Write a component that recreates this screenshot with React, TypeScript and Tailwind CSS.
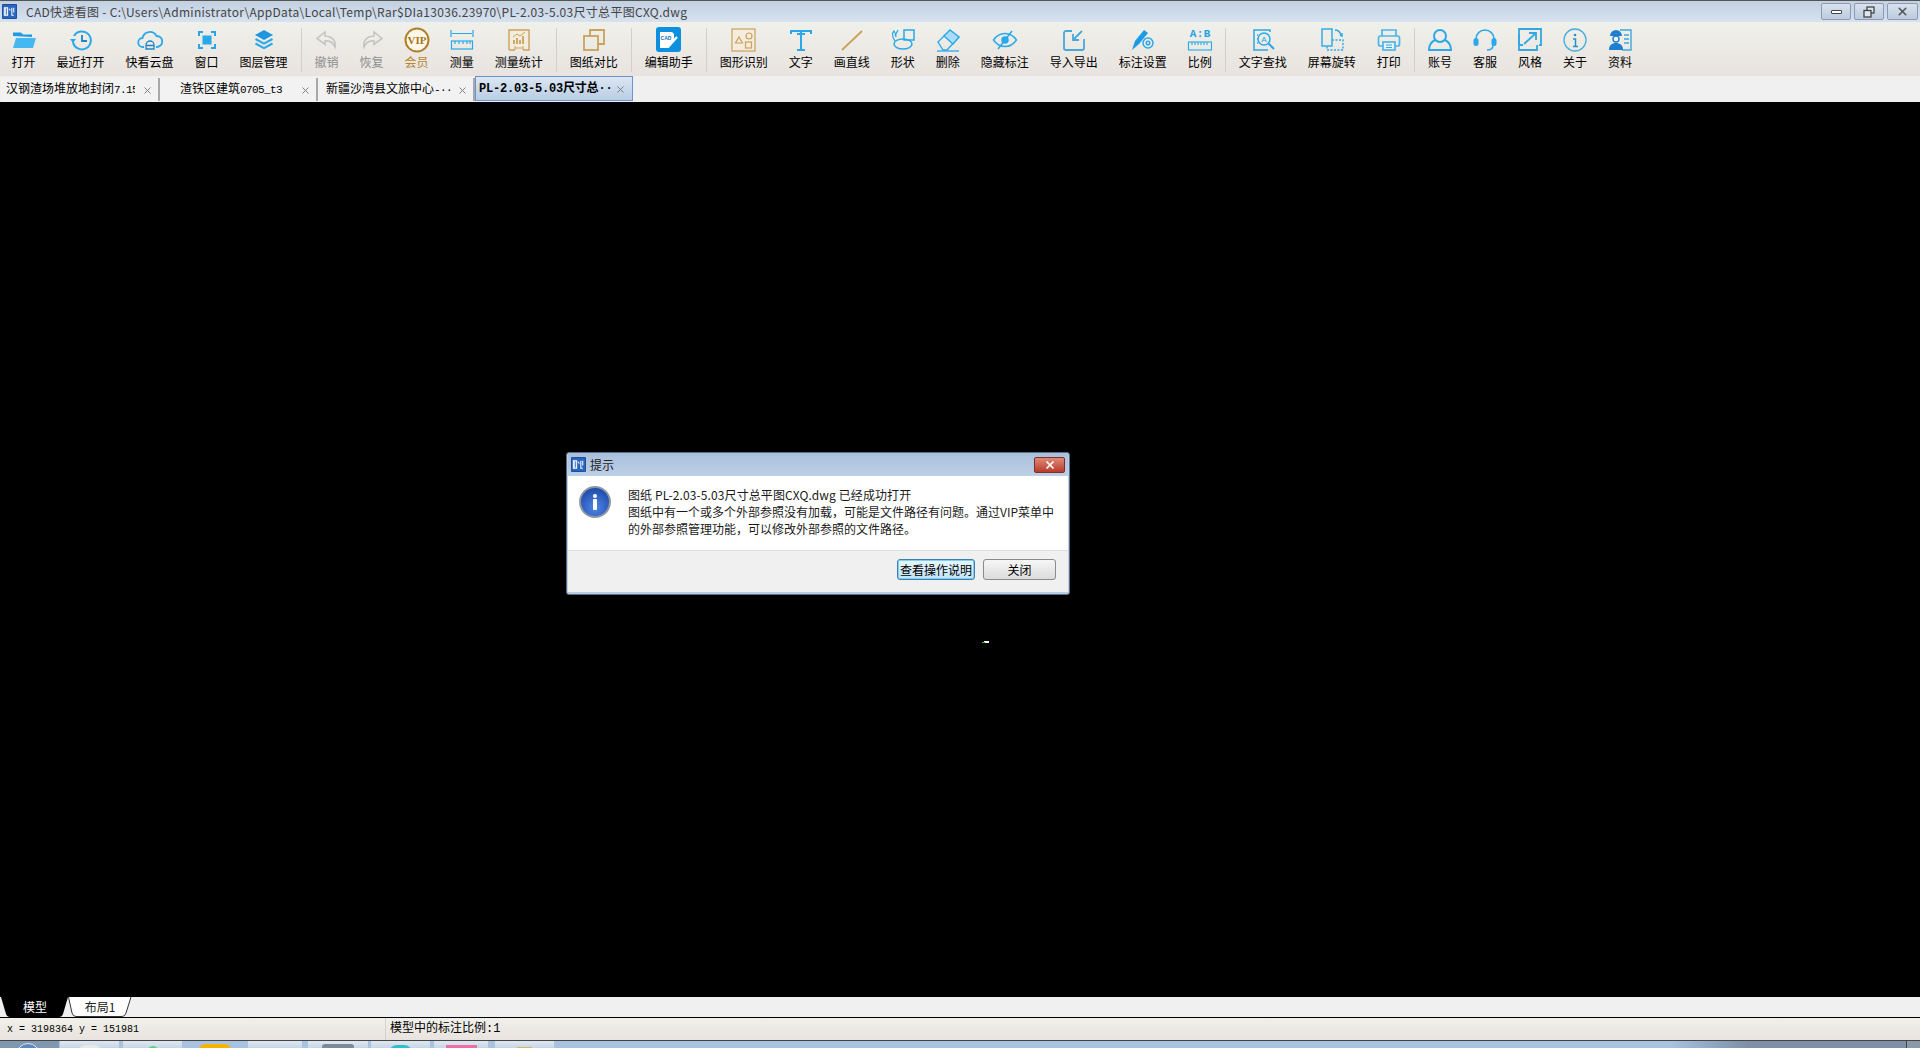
import type { ReactNode } from "react";
import { X } from "lucide-react";

const blue = "#29a9ea";
const gold = "#c9a25e";
const grey = "#c4c4c4";

// 软件图标（标题栏和对话框共用）
function AppLogo({ className }: { className: string }) {
  return (
    <svg viewBox="0 0 16 16" className={className}>
      <rect width="16" height="16" rx="1" fill="#1f4e9c" />
      <rect x="1" y="1" width="14" height="14" fill="#2a66bd" />
      <path d="M2.500 4h3.500v8H2.500zM4 4v8M7.500 5l1.500 2M10.500 4v8h2M12.500 4v5" stroke="#fff" strokeWidth="1.100" fill="none" />
    </svg>
  );
}

type IconProps = { children: ReactNode; color?: string; sw?: number };

function Ico({ children, color = blue, sw = 1.5 }: IconProps) {
  return (
    <svg viewBox="0 0 26 26" width="26" height="26" fill="none" stroke={color} strokeWidth={sw}>
      {children}
    </svg>
  );
}

const icons: Record<string, ReactNode> = {
  打开: (
    <Ico>
      <path d="M2 9V5.500h8l2 2h9v2.500z" fill="#1f9be6" stroke="none" />
      <path d="M2 21l3-10h20l-3 10z" fill="#45b8f2" stroke="none" />
    </Ico>
  ),
  最近打开: (
    <Ico>
      <path d="M6 9a9 9 0 1 1-1 6" strokeWidth="2" />
      <path d="M2 12h6l-3 4z" fill={blue} stroke="none" />
      <path d="M14 8v6h5" stroke="#1d86c9" strokeWidth="1.800" />
    </Ico>
  ),
  快看云盘: (
    <Ico>
      <path d="M7 20H6a4.500 4.500 0 0 1-.5-9A7.500 7.500 0 0 1 19.500 9a5.500 5.500 0 0 1 .5 11h-1" strokeWidth="1.800" />
      <path d="M9 22v-4a4 4 0 0 1 8 0v4zM9 18.500h8" strokeWidth="1.300" stroke="#1d86c9" />
    </Ico>
  ),
  窗口: (
    <Ico sw={2}>
      <path d="M5 9V5h4M17 5h4v4M21 17v4h-4M9 21H5v-4" stroke="#26a6e8" />
      <rect x="8.500" y="8.500" width="9" height="9" fill={blue} stroke="none" />
    </Ico>
  ),
  图层管理: (
    <Ico>
      <path d="M13 3l9 5-9 5-9-5z" fill="#2096de" stroke="none" />
      <path d="M4.500 12l8.500 4.700 8.500-4.700M4.500 16.500l8.500 4.700 8.500-4.700" stroke="#2ba8ec" strokeWidth="2" />
    </Ico>
  ),
  撤销: (
    <Ico color={grey} sw={1.600}>
      <path d="M11 5l-8 6.500 8 6V14c4-.5 8 1 10 6 1-6-2-10.500-10-11z" />
    </Ico>
  ),
  恢复: (
    <Ico color={grey} sw={1.600}>
      <path d="M15 5l8 6.500-8 6V14c-4-.5-8 1-10 6-1-6 2-10.500 10-11z" />
    </Ico>
  ),
  会员: (
    <svg viewBox="0 0 26 26" width="26" height="26">
      <circle cx="13" cy="13" r="11.500" fill="#fff8e8" stroke="#b07f2a" strokeWidth="2" />
      <text x="13" y="17" textAnchor="middle" fontSize="11" fontWeight="700" fontFamily="'Liberation Serif', serif" fill="#a8741c">
        VIP
      </text>
    </svg>
  ),
  测量: (
    <Ico sw={1.200}>
      <path d="M2 3v7M24 3v7M3 6.500h20" />
      <rect x="2.500" y="14" width="21" height="8" />
      <path d="M6 14v3M10 14v3M14 14v3M18 14v3M21 14v3" />
    </Ico>
  ),
  测量统计: (
    <Ico color={gold} sw={1.400}>
      <path d="M3 23V3h20v20h-6M9 23H3" fill="#f4eddd" />
      <path d="M8 13v4M11 11v6M14 13v4M17 9v8" strokeWidth="1.800" />
      <path d="M7 10l4-3 3 2 5-4" strokeWidth="1" />
      <path d="M9 21h8M9 19v4M17 19v4" strokeWidth="1" />
    </Ico>
  ),
  图纸对比: (
    <Ico color={gold} sw={1.800}>
      <rect x="3" y="9" width="14" height="14" />
      <path d="M9 9V3h14v14h-6" />
    </Ico>
  ),
  编辑助手: (
    <svg viewBox="0 0 26 26" width="26" height="26">
      <rect width="25" height="25" rx="3" fill="#0d8fe0" />
      <path d="M4 20V5h12l2 2v6l-4 6-1 2H4z" fill="#fff" />
      <text x="10" y="12.500" textAnchor="middle" fontSize="5" fontWeight="700" fontFamily="'Liberation Sans', sans-serif" fill="#0d70b8">
        CAD
      </text>
      <path d="M13 19l8-9" stroke="#fff" strokeWidth="2.200" />
    </svg>
  ),
  图形识别: (
    <Ico color={gold} sw={1.200}>
      <rect x="1" y="2" width="23" height="22" fill="#f4eddd" />
      <path d="M8 10l3.500 6h-7z" />
      <circle cx="18" cy="9" r="3" />
      <rect x="14.500" y="15" width="6" height="6" />
    </Ico>
  ),
  文字: (
    <Ico sw={2}>
      <path d="M3 7V4h20v3M13 4v19M9 23h8M9 7h8" />
    </Ico>
  ),
  画直线: (
    <Ico color={gold} sw={1.800}>
      <path d="M3 23L23 4" />
    </Ico>
  ),
  形状: (
    <Ico>
      <rect x="14" y="3" width="10" height="10" />
      <ellipse cx="13" cy="17" rx="9" ry="5" />
      <path d="M5 14c-3-4-3-8-1-10 2 3 2 5 2 6M8 3L5 9" strokeWidth="1.300" />
    </Ico>
  ),
  删除: (
    <Ico sw={1.300}>
      <path d="M3 15L15 3l9 7-12 13H8z" />
      <path d="M15 3l9 7-6 7-9-8z" fill="#a9dcf6" />
      <path d="M2 24h22" />
    </Ico>
  ),
  隐藏标注: (
    <Ico>
      <path d="M1.500 13C5 8 9 6.500 13 6.500S21 8 24.500 13C21 18 17 19.500 13 19.500S5 18 1.500 13z" />
      <circle cx="13" cy="13" r="3" fill={blue} />
      <path d="M20 4L6 22" />
    </Ico>
  ),
  导入导出: (
    <Ico sw={1.500}>
      <path d="M11 4H5a2 2 0 0 0-2 2v15a2 2 0 0 0 2 2h16a2 2 0 0 0 2-2v-9" stroke="#4aa7db" strokeWidth="1.800" />
      <path d="M21 4l-9 9M12 7v6h6" stroke="#4aa7db" strokeWidth="1.800" />
    </Ico>
  ),
  标注设置: (
    <Ico>
      <path d="M2 23l3-9 9-11 4 3-9 11z" fill="#1c9ae6" stroke="none" />
      <circle cx="18" cy="16" r="5" />
      <circle cx="18" cy="16" r="1.800" />
    </Ico>
  ),
  比例: (
    <Ico sw={1.100}>
      <text x="6" y="10" textAnchor="middle" fontSize="11" fontWeight="700" fontFamily="'Liberation Mono', monospace" fill="#22a2e8" stroke="none">
        A
      </text>
      <text x="13" y="10" textAnchor="middle" fontSize="11" fontWeight="700" fontFamily="'Liberation Mono', monospace" fill="#22a2e8" stroke="none">
        :
      </text>
      <text x="20" y="10" textAnchor="middle" fontSize="11" fontWeight="700" fontFamily="'Liberation Mono', monospace" fill="#22a2e8" stroke="none">
        B
      </text>
      <rect x="1.500" y="15" width="23" height="8" />
      <path d="M5 15v3M8 15v3M11 15v3M14 15v3M17 15v3M20 15v3" />
    </Ico>
  ),
  文字查找: (
    <Ico sw={1.500}>
      <path d="M20 5V3H4v20h14" stroke="#30a5e2" />
      <circle cx="14" cy="12" r="6" />
      <path d="M18.500 16.500L24 22" strokeWidth="2" />
      <path d="M7 8h1M7 12h1M7 16h1" />
      <text x="14" y="15" textAnchor="middle" fontSize="8" fontFamily="'Liberation Sans', sans-serif" fill="#22a2e8" stroke="none">
        A
      </text>
    </Ico>
  ),
  屏幕旋转: (
    <Ico sw={1.400}>
      <rect x="3" y="2" width="10" height="17" />
      <path d="M13 13h11v10H8v-4" strokeDasharray="2 1.500" />
      <path d="M16 3c3 0 5 2 6 5" />
      <path d="M21 8l2 1 0-3" />
    </Ico>
  ),
  打印: (
    <Ico sw={1.700}>
      <path d="M6 9V3h14v6" stroke="#4db5e8" />
      <rect x="2.500" y="9" width="21" height="10" rx="2" stroke="#4db5e8" />
      <rect x="7" y="15" width="12" height="8" fill="#f0eeea" stroke="#4db5e8" />
      <path d="M10 18h6M10 20.500h6" strokeWidth="1" />
    </Ico>
  ),
  账号: (
    <Ico sw={2}>
      <circle cx="13" cy="9" r="6" />
      <path d="M8 13c-4 2-6 5-6 10h22c0-5-2-8-6-10" />
    </Ico>
  ),
  客服: (
    <Ico sw={1.500}>
      <path d="M4 14v-2a9 9 0 0 1 18 0v2M21 18c0 3-2 5-6 5" />
      <rect x="1.500" y="11" width="5" height="8" rx="2.500" fill={blue} stroke="none" />
      <rect x="19.500" y="11" width="5" height="8" rx="2.500" fill={blue} stroke="none" />
    </Ico>
  ),
  风格: (
    <Ico sw={1.800}>
      <path d="M6 18H2V2h22v16h-2" stroke="#33a7df" />
      <path d="M2 7v16h18v-5" stroke="#33a7df" />
      <path d="M7 17L19 6M12 6h7v7" stroke="#33a7df" />
    </Ico>
  ),
  关于: (
    <Ico color="#45aee0" sw={1.300}>
      <circle cx="13" cy="13" r="11" />
      <circle cx="13" cy="8" r="1.300" fill="#2690c9" stroke="none" />
      <path d="M11 12h2.500v7M11 19.500h5" stroke="#2690c9" strokeWidth="1.500" />
    </Ico>
  ),
  资料: (
    <Ico sw={1.400}>
      <path d="M13 3h11v20H15M17 8h5M17 12h5M17 16h5" stroke="#3ea8dc" />
      <path d="M3 9a6 6 0 0 1 12 0z" fill="#1e7fd0" stroke="none" />
      <circle cx="9" cy="12" r="3" fill="#fff" stroke="#1e7fd0" />
      <path d="M2 23c0-5 3-7 7-7s7 2 7 7z" fill="#1e7fd0" stroke="none" />
    </Ico>
  ),
};

type ToolItem = { label: string; muted?: boolean; vip?: boolean };

const toolGroups: ToolItem[][] = [
  [{ label: "打开" }, { label: "最近打开" }, { label: "快看云盘" }, { label: "窗口" }, { label: "图层管理" }],
  [
    { label: "撤销", muted: true },
    { label: "恢复", muted: true },
    { label: "会员", vip: true },
    { label: "测量" },
    { label: "测量统计" },
  ],
  [{ label: "图纸对比" }],
  [{ label: "编辑助手" }],
  [
    { label: "图形识别" },
    { label: "文字" },
    { label: "画直线" },
    { label: "形状" },
    { label: "删除" },
    { label: "隐藏标注" },
    { label: "导入导出" },
    { label: "标注设置" },
    { label: "比例" },
  ],
  [{ label: "文字查找" }, { label: "屏幕旋转" }, { label: "打印" }],
  [{ label: "账号" }, { label: "客服" }, { label: "风格" }, { label: "关于" }, { label: "资料" }],
];

function ToolButton({ item }: { item: ToolItem }) {
  const tone = item.muted ? "text-[#8f8f8f]" : item.vip ? "text-[#b8862e]" : "text-black";
  return (
    <div className={`flex flex-col items-center px-[10.5px] ${tone}`}>
      {/* 图标比两个字略宽，用负边距让文字决定按钮宽度 */}
      <div className="-mx-[1px] flex h-[26px] w-[26px] items-center justify-center">{icons[item.label]}</div>
      <span className="whitespace-nowrap text-[12px] leading-[17px]">{item.label}</span>
    </div>
  );
}

// 标签页里的西文比中文窄
function Latin({ children }: { children: ReactNode }) {
  return <span className="text-[11px] tracking-[-0.6px]">{children}</span>;
}

const tabs = [
  { key: "a", name: <>汉钢渣场堆放地封闭<Latin>7.15</Latin></>, w: "w-[158px]", text: "w-[129px]", pad: "pl-[4px]" },
  { key: "b", name: <>渣铁区建筑<Latin>0705_t3</Latin></>, w: "w-[158px]", text: "w-[118px]", pad: "pl-[20px]" },
  { key: "c", name: <>新疆沙湾县文旅中心<Latin>-··</Latin></>, w: "w-[157px]", text: "w-[130px]", pad: "pl-[8px]" },
];

function WinBtn({ children, className }: { children: ReactNode; className: string }) {
  return (
    <div className={`flex h-[17px] items-center justify-center rounded-[2px] border border-[#8c9bb5] bg-gradient-to-b from-[#d8e2ee] to-[#bccbde] ${className}`}>
      {children}
    </div>
  );
}

// 任务栏只露出顶部几像素
const taskButtons = [
  { box: "ml-[1px] w-[59px] bg-gradient-to-b from-[#dfe8f1] to-[#c6d6e6]", icon: "mt-[4px] w-[24px] rounded-t-[10px] bg-[#e8e8e8]" },
  { box: "ml-[4px] w-[59px] bg-gradient-to-b from-[#dfe8f1] to-[#c6d6e6]", icon: "mt-[5px] w-[12px] rounded-t-[6px] bg-[#5fd37a]" },
  { box: "w-[65px]", icon: "mt-[3px] w-[32px] rounded-t-[6px] bg-[#f5b400]" },
  { box: "ml-[1px] w-[54px] bg-gradient-to-b from-[#dfe8f1] to-[#c6d6e6]", icon: "w-0" },
  { box: "ml-[6px] w-[60px] bg-gradient-to-b from-[#dfe8f1] to-[#c6d6e6]", icon: "mt-[3px] w-[32px] rounded-t-[3px] bg-[#7d8a99]" },
  { box: "ml-[3px] w-[59px] bg-gradient-to-b from-[#dfe8f1] to-[#c6d6e6]", icon: "mt-[4px] w-[23px] rounded-t-[10px] bg-[#2fc0c8]" },
  { box: "ml-[4px] w-[54px] bg-gradient-to-b from-[#dfe8f1] to-[#c6d6e6]", icon: "mt-[4px] w-[31px] bg-[#f06ea0]" },
  { box: "ml-[7px] w-[59px] bg-gradient-to-b from-[#dfe8f1] to-[#c6d6e6]", icon: "mt-[6px] w-[15px] bg-[#d8b65a]" },
];

export default function App() {
  return (
    <div
      className="flex h-[1048px] w-[1920px] flex-col overflow-hidden bg-black text-[12px] text-black"
      style={{ fontFamily: "'Noto Sans CJK SC', 'Liberation Sans', sans-serif" }}
    >
      {/* 标题栏 */}
      <div className="flex h-[22px] shrink-0 items-center border-t border-[#555] bg-gradient-to-b from-[#c3d0e0] to-[#d6e2f0] pl-[2px] pr-[2px]">
        <AppLogo className="h-[15px] w-[15px]" />
        <span className="ml-[9px] text-[12px] tracking-[0.3px] text-[#444]">
          CAD快速看图 - C:\Users\Administrator\AppData\Local\Temp\Rar$DIa13036.23970\PL-2.03-5.03尺寸总平图CXQ.dwg
        </span>
        <div className="ml-auto flex gap-[3px]">
          <WinBtn className="w-[30px]">
            <div className="h-[4px] w-[11px] rounded-[1px] border border-[#444] bg-white" />
          </WinBtn>
          <WinBtn className="w-[30px]">
            <svg viewBox="0 0 12 12" width="12" height="12" fill="none" stroke="#444" strokeWidth="1.300">
              <rect x="4" y="1" width="7" height="6" fill="#dfe7f1" />
              <rect x="1" y="4.500" width="7" height="6.500" fill="#dfe7f1" />
            </svg>
          </WinBtn>
          <WinBtn className="w-[31px]">
            <X size={13} strokeWidth={3} color="#555" />
          </WinBtn>
        </div>
      </div>

      {/* 工具栏 */}
      <div className="flex h-[54px] shrink-0 items-start bg-gradient-to-b from-[#f0f0ea] to-[#e8e3df] pl-[1px] pt-[5px]">
        {toolGroups.map((group, i) => (
          <div key={i} className="flex items-start">
            {i > 0 && <div className="mx-[2.5px] mt-[1px] h-[44px] w-px bg-[#d2cfca]" />}
            {group.map((item) => (
              <ToolButton key={item.label} item={item} />
            ))}
          </div>
        ))}
      </div>

      {/* 文档标签 */}
      <div className="flex h-[26px] shrink-0 items-end bg-[#f0f0f0] pb-px pl-[2px]">
        {tabs.map((t) => (
          <div
            key={t.key}
            className={`flex h-[23px] items-center border-r-2 border-[#a8a8a8] bg-[#f2f2f2] pt-px ${t.w} ${t.pad}`}
            style={{ fontFamily: "'Liberation Mono', 'Noto Sans CJK SC', monospace" }}
          >
            <span className={`shrink-0 overflow-hidden whitespace-nowrap text-[12px] ${t.text}`}>{t.name}</span>
            <X size={11} className="ml-auto mr-[5px] shrink-0" color="#777" />
          </div>
        ))}
        <div
          className="flex h-[25px] w-[158px] items-center border border-[#6f93c8] bg-gradient-to-b from-[#dbe6f3] to-[#b9cde4] pl-[3px] pt-px"
          style={{ fontFamily: "'Liberation Mono', 'Noto Sans CJK SC', monospace" }}
        >
          <span className="whitespace-nowrap text-[12px] font-bold tracking-[-0.2px]">PL-2.03-5.03尺寸总··</span>
          <X size={11} className="ml-auto mr-[6px] shrink-0" color="#777" />
        </div>
      </div>

      {/* 绘图区 */}
      <main className="relative flex-1 bg-black">
        <div className="absolute left-[984px] top-[539px] h-[2px] w-[5px] bg-white" />
        <div className="absolute left-[982px] top-[540px] h-px w-[3px] bg-[#18d818]" />

        {/* 提示对话框 */}
        <div className="absolute left-[566px] top-[350px] flex h-[143px] w-[504px] flex-col rounded-[3px] border border-[#5b6f8a] bg-[#b9cde3] px-[1px] pb-[2px]">
          <div className="flex h-[23px] shrink-0 items-center bg-gradient-to-b from-[#a9c0dc] to-[#bcd0e6] pl-[3px] pr-[3px]">
            <AppLogo className="h-[15px] w-[15px]" />
            <span className="ml-[4px] text-[12px] text-[#222]">提示</span>
            <div className="ml-auto flex h-[16px] w-[31px] items-center justify-center rounded-[2px] border border-[#7a3228] bg-gradient-to-b from-[#e0887a] to-[#b8392c]">
              <X size={12} strokeWidth={3.500} color="#fff" />
            </div>
          </div>
          <div className="flex h-[74px] shrink-0 bg-white pl-[11px] pt-[10px]">
            <div className="flex h-[32px] w-[32px] shrink-0 items-center justify-center rounded-full border-[2px] border-[#8d96a3] bg-[radial-gradient(circle_at_50%_70%,#4f87e6,#143c9c)]">
              <div className="flex flex-col items-center gap-px">
                <div className="h-[4px] w-[4px] rounded-full bg-white" />
                <div className="h-[11px] w-[4px] rounded-[1px] bg-white" />
              </div>
            </div>
            <div className="ml-[17px] w-[428px] text-[12px] leading-[17px] text-[#1a1a1a]">
              <p className="whitespace-nowrap tracking-[0.1px]">图纸 PL-2.03-5.03尺寸总平图CXQ.dwg 已经成功打开</p>
              <p>图纸中有一个或多个外部参照没有加载，可能是文件路径有问题。通过VIP菜单中的外部参照管理功能，可以修改外部参照的文件路径。</p>
            </div>
          </div>
          <div className="flex flex-1 items-start justify-end border-t border-[#dfdfdf] bg-[#f0f0f0] pr-[12px] pt-[8px]">
            <button className="h-[21px] w-[78px] rounded-[3px] border border-[#3c7fb1] bg-gradient-to-b from-[#e9f6fd] to-[#bfe3f7] text-[12px] leading-none shadow-[inset_0_0_0_1px_#7fd0f5]">
              查看操作说明
            </button>
            <button className="ml-[8px] h-[21px] w-[73px] rounded-[3px] border border-[#8a8a8a] bg-gradient-to-b from-[#f6f6f6] to-[#dcdcdc] text-[12px] leading-none">
              关闭
            </button>
          </div>
        </div>
      </main>

      {/* 模型 / 布局 */}
      <div className="flex h-[21px] shrink-0 border-b border-black bg-[#f0f0f0]">
        <div className="relative ml-[1px] flex h-[20px] w-[68px] items-center justify-center text-[12px] text-white">
          <svg viewBox="0 0 68 20" className="absolute inset-0 h-full w-full">
            <path d="M0 0H67L62 17Q61 20 58 20H9Q6 20 5 17z" fill="#000" />
          </svg>
          <span className="relative">模型</span>
        </div>
        <div className="relative -ml-[1px] flex h-[20px] w-[64px] items-center justify-center text-[12px] text-[#222]">
          <svg viewBox="0 0 64 20" className="absolute inset-0 h-full w-full">
            <path d="M0.500 0L4 16Q5 19.500 8 19.500H54Q57 19.500 58 16L63 0" fill="#fff" stroke="#333" />
          </svg>
          <span className="relative">布局1</span>
        </div>
      </div>

      {/* 状态栏 */}
      <div className="flex h-[22px] shrink-0 items-center bg-gradient-to-b from-[#f0f0ea] to-[#e8e3df]">
        <span className="w-[385px] whitespace-nowrap pl-[7px] text-[10px]" style={{ fontFamily: "'Liberation Mono', monospace" }}>
          x = 3198364 y = 151981
        </span>
        <div className="h-full w-px bg-[#d5d2cd]" />
        <span className="ml-[4px] text-[12px]" style={{ fontFamily: "'Liberation Mono', 'Noto Sans CJK SC', monospace" }}>
          模型中的标注比例:1
        </span>
      </div>

      {/* 任务栏（下半部分被裁掉） */}
      <div className="flex h-[8px] shrink-0 items-start overflow-hidden border-t border-[#444] bg-gradient-to-r from-[#a7c3e0] from-[87%] to-[#7d90a8] to-[91%]">
        <div className="h-full w-[59px] shrink-0 bg-[#8097b0] pl-[16px] pt-[2px]">
          <div className="h-[24px] w-[24px] rounded-full border border-[#dfe9f3] bg-[#5d8ab8]" />
        </div>
        {taskButtons.map((b, i) => (
          <div key={i} className={`flex h-full shrink-0 justify-center ${b.box}`}>
            <div className={`h-[8px] ${b.icon}`} />
          </div>
        ))}
        <span className="ml-auto mr-[38px] mt-[5px] text-[12px] leading-[14px] text-white">10:33</span>
        <div className="h-full w-[14px] shrink-0 border-l border-[#444] bg-[#8a9aab]" />
      </div>
    </div>
  );
}
